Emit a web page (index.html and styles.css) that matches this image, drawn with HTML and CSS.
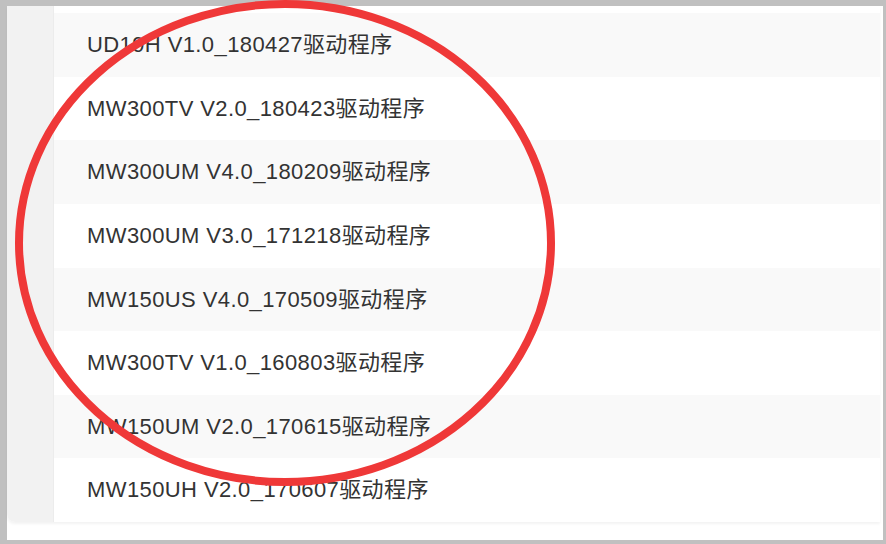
FILE: index.html
```html
<!DOCTYPE html>
<html lang="zh-CN">
<head>
  <meta charset="UTF-8" />
  <meta name="viewport" content="width=device-width, initial-scale=1.0" />
  <title>驱动程序下载</title>
  <link rel="stylesheet" href="styles.css">
</head>
<body>
  <div class="frame">
    <div class="card">
      <div class="side"></div>
      <ul class="list">
        <li>UD19H V1.0_180427驱动程序</li>
        <li>MW300TV V2.0_180423驱动程序</li>
        <li>MW300UM V4.0_180209驱动程序</li>
        <li>MW300UM V3.0_171218驱动程序</li>
        <li>MW150US V4.0_170509驱动程序</li>
        <li>MW300TV V1.0_160803驱动程序</li>
        <li>MW150UM V2.0_170615驱动程序</li>
        <li>MW150UH V2.0_170607驱动程序</li>
      </ul>
    </div>
  </div>

  <!-- red marker circle drawn over the screenshot -->
  <svg class="mark" width="886" height="544" viewBox="0 0 886 544">
    <ellipse cx="285" cy="243" rx="266" ry="239" fill="none" stroke="#ef3838" stroke-width="8" />
  </svg>
</body>
</html>
```

FILE: styles.css
```css
html, body {
  height: 100%;
}
body {
  margin: 0;
  padding: 6px 3px 4px 7px;
  box-sizing: border-box;
  background: #c0c0c0;
  font-family: "Liberation Sans", "Noto Sans CJK SC", sans-serif;
  overflow: hidden;
  position: relative;
}
.frame {
  height: 100%;
  background: #fff;
  padding-right: 3px;
}
.card {
  display: flex;
  background: #fff;
  border-bottom-left-radius: 8px;
  box-shadow: 0 2px 3px rgba(0, 0, 0, 0.05);
  overflow: hidden;
}
.side {
  width: 46px;
  background: #f2f2f2;
  border-right: 1px solid #ececec;
}
.list {
  flex: 1;
  list-style: none;
  margin: 0;
  padding: 7px 0 0 0;
}
.list li {
  height: 63.625px;
  line-height: 63px;
  padding-left: 33px;
  font-size: 22px;
  letter-spacing: 0.4px;
  color: #333;
}
.list li:nth-child(odd) {
  background: #f9f9f9;
}
/* Overlay */
.mark {
  position: absolute;
  left: 0;
  top: 0;
}
```
